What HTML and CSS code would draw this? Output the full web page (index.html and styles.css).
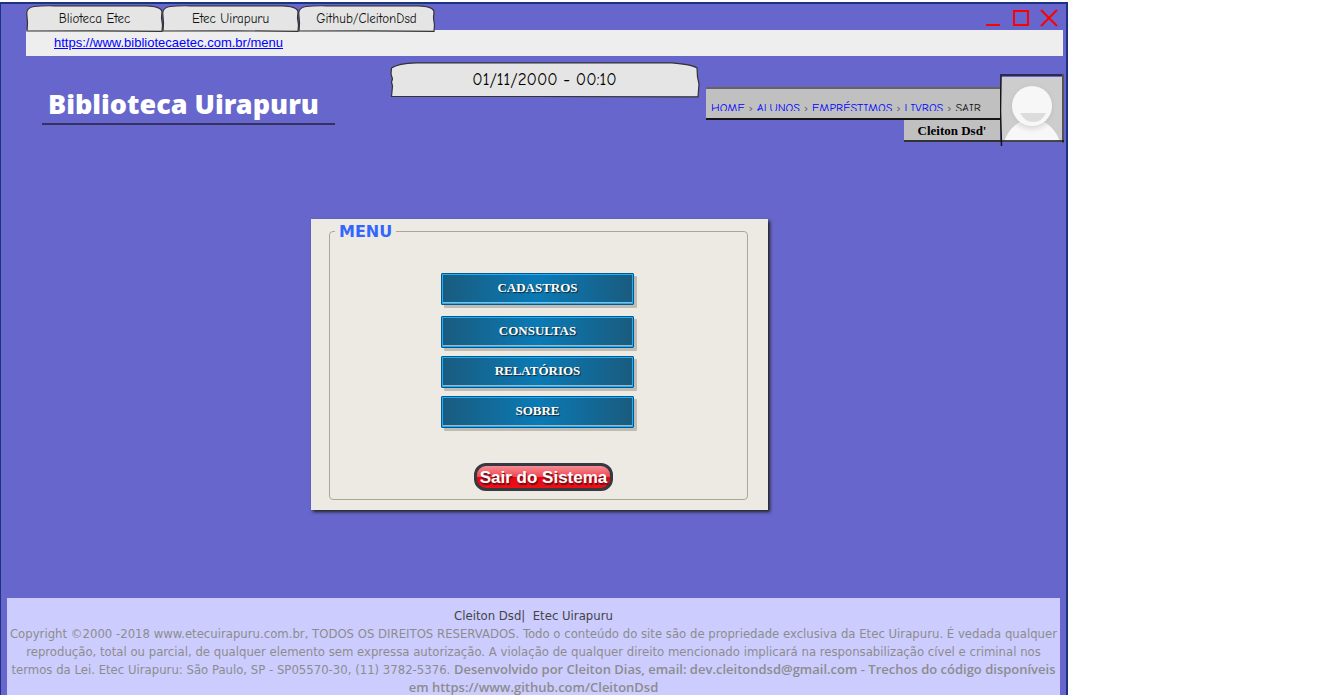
FILE: index.html
```html
<!DOCTYPE html>
<html lang="pt-BR">
<head>
<meta charset="utf-8">
<title>Biblioteca Uirapuru</title>
<link rel="stylesheet" href="styles.css">
</head>
<body>
<div class="window">
  <div class="titlebar">
    <div class="tabs">
      <button class="tab" type="button"><svg class="sketch" viewBox="0 0 137 27" preserveAspectRatio="none"><path d="M1 26 L1.500 18 L.8 9 Q0 3 8 1.500 Q15 .6 28 .8 L120 .8 Q136 1.500 136 7 L135.500 13 L136.500 20 L136 26.300 L70 25.800 Z"/></svg><span class="label">Blioteca Etec</span></button>
      <button class="tab" type="button"><svg class="sketch" viewBox="0 0 137 27" preserveAspectRatio="none"><path d="M1 26 L1.500 18 L.8 9 Q0 3 8 1.500 Q15 .6 28 .8 L120 .8 Q136 1.500 136 7 L135.500 13 L136.500 20 L136 26.300 L70 25.800 Z"/></svg><span class="label">Etec Uirapuru</span></button>
      <button class="tab" type="button"><svg class="sketch" viewBox="0 0 137 27" preserveAspectRatio="none"><path d="M1 26 L1.500 18 L.8 9 Q0 3 8 1.500 Q15 .6 28 .8 L120 .8 Q136 1.500 136 7 L135.500 13 L136.500 20 L136 26.300 L70 25.800 Z"/></svg><span class="label">Github/CleitonDsd</span></button>
    </div>
    <div class="controls">
      <button class="control" type="button" aria-label="Minimizar"><svg width="18" height="18" viewBox="0 0 18 18"><path d="M2 16H16"/></svg></button>
      <button class="control" type="button" aria-label="Maximizar"><svg width="18" height="18" viewBox="0 0 18 18"><path d="M2 2H16V16H2Z"/></svg></button>
      <button class="control" type="button" aria-label="Fechar"><svg width="18" height="18" viewBox="0 0 18 18"><path d="M1 1L17 17M17 1L1 17"/></svg></button>
    </div>
  </div>
  <div class="address"><a href="#">https://www.bibliotecaetec.com.br/menu</a></div>

  <header class="header">
    <h1 class="brand">Biblioteca Uirapuru</h1>
    <div class="clock"><svg class="sketch" viewBox="0 0 310 36" preserveAspectRatio="none"><path d="M1.500 34.500 L2.500 24 L1.500 20 L2.500 17 L1 12 L1.500 6 Q8 1.500 26 .9 L282 .9 Q302 2.500 307 6 L307.500 15 L309 22 L308 34.800 L150 34.500 Z"/></svg><time class="label">01/11/2000 - 00:10</time></div>
    <div class="account">
      <div class="account-info">
        <nav class="crumbs">
          <ul class="crumb-list">
            <li><a href="#">HOME</a></li><li><a href="#">ALUNOS</a></li><li><a href="#">EMPRÉSTIMOS</a></li><li><a href="#">LIVROS</a></li><li><a class="leave" href="#">SAIR</a></li>
          </ul>
        </nav>
        <div class="user">Cleiton Dsd'</div>
      </div>
      <svg class="avatar" width="64" height="74" viewBox="0 0 64 74">
        <defs>
          <radialGradient id="halo"><stop offset=".7" stop-color="#b4b4b4"/><stop offset="1" stop-color="#ccc" stop-opacity="0"/></radialGradient>
          <clipPath id="frame"><rect x="1" y="3" width="61" height="64"/></clipPath>
        </defs>
        <rect x="1" y="3" width="62" height="65" fill="#cdcdcd"/>
        <g clip-path="url(#frame)">
          <path d="M4 68C8 56 15 50 24 46H40C49 50 56 56 60 68Z" fill="#f7f7f7"/>
          <circle cx="32" cy="33" r="26" fill="url(#halo)" opacity=".5"/>
          <circle cx="32" cy="32" r="20" fill="#f7f7f7"/>
          <path d="M20 39H46Q42 48 33 48Q25 48 20 39Z" fill="#dcdcdc"/>
        </g>
        <path d="M0 1H63" stroke="#2c2a50" stroke-width="2"/>
        <path d="M63 0V69" stroke="#555" stroke-width="2"/>
        <path d="M0 67H64M1 2L.5 37L1.500 72" stroke="#151515" stroke-width="1.500" fill="none"/>
      </svg>
    </div>
  </header>

  <main class="main">
    <section class="card">
      <fieldset class="menu">
        <legend class="menu-title">MENU</legend>
        <div class="menu-items">
          <button class="menu-button first" type="button">CADASTROS</button>
          <button class="menu-button" type="button">CONSULTAS</button>
          <button class="menu-button" type="button">RELATÓRIOS</button>
          <button class="menu-button" type="button">SOBRE</button>
        </div>
        <button class="exit" type="button">Sair do Sistema</button>
      </fieldset>
    </section>
  </main>

  <footer class="footer">
    <p class="owner">Cleiton Dsd| &nbsp;Etec Uirapuru</p>
    <p class="legal">Copyright ©2000 -2018 www.etecuirapuru.com.br, TODOS OS DIREITOS RESERVADOS. Todo o conteúdo do site são de propriedade exclusiva da Etec Uirapuru. É vedada qualquer<br>reprodução, total ou parcial, de qualquer elemento sem expressa autorização. A violação de qualquer direito mencionado implicará na responsabilização cível e criminal nos<br>termos da Lei. Etec Uirapuru: São Paulo, SP - SP05570-30, (11) 3782-5376. <strong>Desenvolvido por Cleiton Dias, email: dev.cleitondsd@gmail.com - Trechos do código disponíveis<br>em https://www.github.com/CleitonDsd</strong></p>
  </footer>
</div>
</body>
</html>
```
FILE: styles.css
```css
* { box-sizing: border-box; }
html { background: #fff; }
body {
  margin: 0;
  height: 100vh;
  overflow: hidden;
  padding-top: 2px;
  font-family: "Open Sans", sans-serif;
}
button { font: inherit; cursor: pointer; }
a { color: #00f; }

.window {
  display: flex;
  flex-direction: column;
  max-width: 1068px;
  min-height: 100%;
  background: #66c;
  border: solid #1c3282;
  border-width: 2px 2px 0 1px;
}
.titlebar {
  display: flex;
  justify-content: space-between;
  align-items: flex-start;
  height: 26px;
  padding: 1px 8px 0 25px;
}
.tabs { display: flex; }
.tab {
  position: relative;
  z-index: 1;
  width: 137px;
  height: 27px;
  margin-right: -1px;
  padding: 0;
  border: 0;
  background: none;
  font-family: "Comic Sans MS", "Comic Neue", "Noto Sans", sans-serif;
  font-size: 13px;
  line-height: 27px;
  color: #111;
}
.sketch {
  position: absolute;
  inset: 0;
  width: 100%;
  height: 100%;
  fill: #e5e5e5;
  stroke: #333;
  stroke-width: 1.2;
}
.label { position: relative; }
.controls { display: flex; gap: 10px; padding-top: 4px; }
.control {
  width: 18px;
  height: 18px;
  padding: 0;
  border: 0;
  background: none;
}
.control svg { display: block; fill: none; stroke: #f00; stroke-width: 2; }
.address {
  height: 26px;
  margin: 0 3px 0 25px;
  padding-left: 28px;
  background: #eee;
  font: 13px/26px "Liberation Sans", Arial, sans-serif;
}

.header {
  display: flex;
  justify-content: space-between;
  align-items: flex-start;
  height: 92px;
  padding: 6px 2px 0 41px;
}
.brand {
  width: 293px;
  margin: 23px 0 0;
  padding-left: 6px;
  border-bottom: 2px solid #363260;
  font: 900 27px/38px "Noto Sans", Tahoma, sans-serif;
  color: #fff;
  white-space: nowrap;
}
.clock {
  position: relative;
  width: 310px;
  height: 36px;
  margin-left: 48px;
  font: 17px/36px "Comic Sans MS", "Comic Neue", "Noto Sans", sans-serif;
  text-align: center;
  color: #000;
}
.account { display: flex; padding-top: 12px; }
.account-info {
  display: flex;
  flex-direction: column;
  align-items: flex-end;
  padding-top: 13px;
}
.crumbs {
  width: 294px;
  height: 33px;
  padding: 9px 8px 0 5px;
  background: #c0c0c0;
  border-top: 2px solid #646464;
  border-bottom: 2px solid #151515;
}
.crumb-list {
  display: flex;
  gap: 4px;
  height: 13px;
  margin: 0;
  padding: 0;
  overflow: hidden;
  list-style: none;
  font: 12px/20px "Comic Sans MS", "Comic Neue", "Noto Sans", sans-serif;
  color: #666;
}
.crumb-list li { display: flex; flex: none; }
.crumb-list li + li::before { content: "›"; margin-right: 4px; }
.crumb-list a { text-decoration: none; }
.crumb-list .leave { color: #111; }
.user {
  width: 96px;
  height: 22px;
  border-bottom: 2px solid #333;
  background: #c0c0c0;
  font: bold 13px/21px "Liberation Serif", serif;
  text-align: center;
  color: #000;
}
.avatar { display: block; }

.main {
  display: flex;
  justify-content: center;
  padding: 71px 0 88px 12px;
}
.card {
  width: 457px;
  padding: 3px 20px 10px 18px;
  background: #edeae3;
  box-shadow: 2px 2px 3px #222;
}
.menu {
  display: flex;
  flex-direction: column;
  align-items: center;
  margin: 0;
  padding: 32px 2px 8px 0;
  border: 1px solid #aca899;
  border-radius: 4px;
}
.menu-title {
  margin-left: 5px;
  padding: 0 4px;
  font: bold 16px/19px "DejaVu Sans", Verdana, sans-serif;
  color: #36f;
}
.menu-items { display: flex; flex-direction: column; gap: 8px; }
.menu-button {
  width: 193px;
  height: 32px;
  padding: 0 0 3px;
  border: 1px solid #05588c;
  border-radius: 1px;
  background: linear-gradient(90deg, #1a5b7e, #0a7ab5 50%, #1a5b7e);
  box-shadow: inset 0 0 0 1px #1ab0ff, inset 0 -2px #9ab8c6, 3px 3px #bfbcb6;
  font: bold 13px/16px "Liberation Serif", serif;
  text-shadow: 1px 1px 1px #123;
  color: #fff;
}
.menu-button.first { margin-bottom: 3px; }
.exit {
  width: 139px;
  height: 28px;
  margin: 35px 0 0 12px;
  padding: 2px 0 0;
  border: 3px solid #36393f;
  border-radius: 12px;
  background: linear-gradient(#f58d95, #ee4550 50%, #e50612 52%, #ed1018);
  font: bold 17px/20px "Liberation Sans", Arial, sans-serif;
  text-shadow: 1px 2px 1px #601018;
  color: #fff;
  white-space: nowrap;
}

.footer {
  flex: 1;
  margin: 0 6px;
  padding: 9px 0 0;
  background: #ccf;
  font: 13px/18px "DejaVu Sans Condensed", "Trebuchet MS", sans-serif;
  text-align: center;
  color: #8c8c8c;
}
.footer p { margin: 0; }
.footer .owner { color: #444; }
.footer strong {
  font-family: "Open Sans", sans-serif;
  font-weight: 600;
  line-height: 16px;
}
```
